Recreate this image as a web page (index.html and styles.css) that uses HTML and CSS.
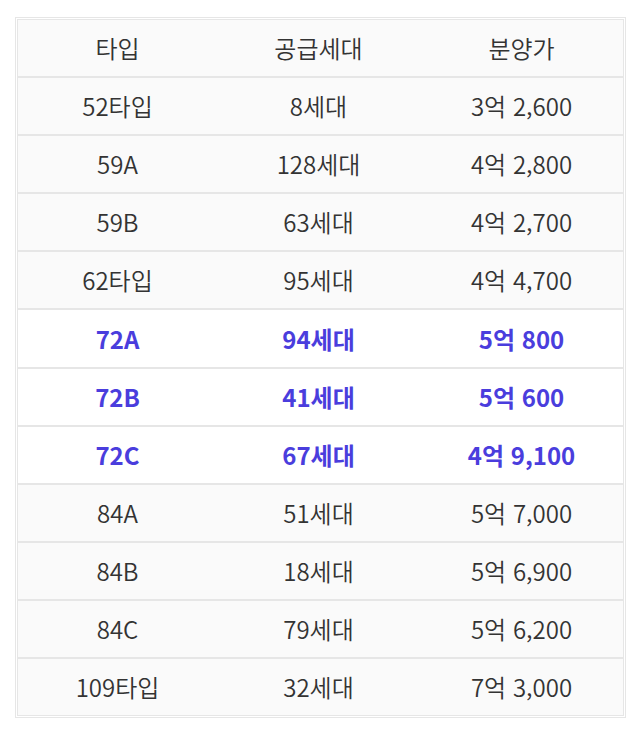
FILE: index.html
```html
<!DOCTYPE html>
<html lang="ko">
<head>
<meta charset="utf-8">
<link rel="stylesheet" href="styles.css">
</head>
<body>
<div class="table">
  <div class="row head"><div>타입</div><div>공급세대</div><div>분양가</div></div>
  <div class="row"><div>52타입</div><div>8세대</div><div>3억 2,600</div></div>
  <div class="row"><div>59A</div><div>128세대</div><div>4억 2,800</div></div>
  <div class="row"><div>59B</div><div>63세대</div><div>4억 2,700</div></div>
  <div class="row"><div>62타입</div><div>95세대</div><div>4억 4,700</div></div>
  <div class="row hl"><div>72A</div><div>94세대</div><div>5억 800</div></div>
  <div class="row hl"><div>72B</div><div>41세대</div><div>5억 600</div></div>
  <div class="row hl"><div>72C</div><div>67세대</div><div>4억 9,100</div></div>
  <div class="row"><div>84A</div><div>51세대</div><div>5억 7,000</div></div>
  <div class="row"><div>84B</div><div>18세대</div><div>5억 6,900</div></div>
  <div class="row"><div>84C</div><div>79세대</div><div>5억 6,200</div></div>
  <div class="row"><div>109타입</div><div>32세대</div><div>7억 3,000</div></div>
</div>
</body>
</html>
```
FILE: styles.css
```css
html, body {
  margin: 0;
  background: #fff;
}
body {
  padding: 17px 15px 0 15px;
  font-family: "Noto Sans CJK KR", "Noto Sans", sans-serif;
  font-size: 24px;
  color: #333;
}
.table {
  width: 607px;
  border: 1px solid #e6e6e6;
  padding: 1px;
}
.row {
  display: grid;
  grid-template-columns: 199px 203px 1fr;
  height: 56.1px;
  border: 1px solid #e6e6e6;
  background: #fafafa;
  align-items: center;
  text-align: center;
  line-height: 1;
  font-weight: 350;
}
.row.hl {
  background: #fff;
  color: #4a3ddd;
  font-weight: 600;
}
```
